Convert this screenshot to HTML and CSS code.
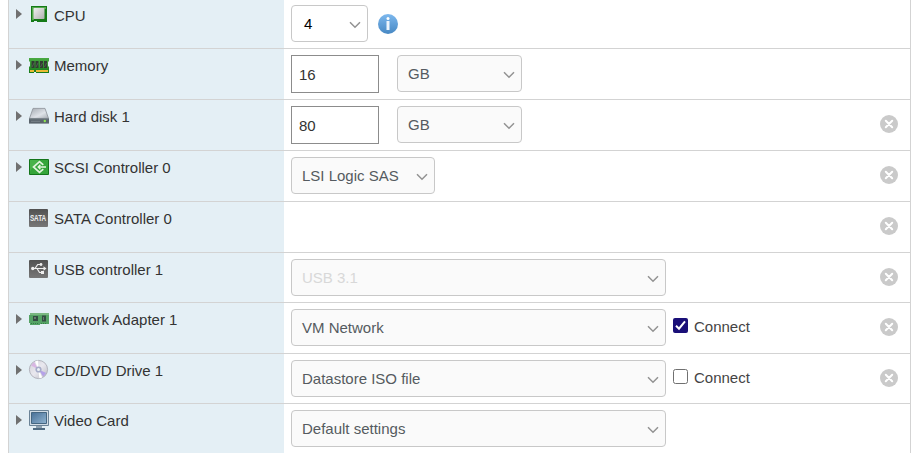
FILE: index.html
```html
<!DOCTYPE html>
<html lang="en">
<head>
<meta charset="utf-8">
<title>Virtual hardware</title>
<link rel="stylesheet" href="styles.css">
</head>
<body>
<svg width="0" height="0" class="defs">
  <defs>
    <linearGradient id="green" x1="0" y1="0" x2="0" y2="1"><stop offset="0" stop-color="#4aaa43"/><stop offset="1" stop-color="#167a18"/></linearGradient>
    <linearGradient id="silver" x1="0" y1="0" x2="1" y2="1"><stop offset="0" stop-color="#f0f0f0"/><stop offset="1" stop-color="#b0b0b0"/></linearGradient>
    <linearGradient id="lid" x1="0" y1="0" x2="1" y2="1"><stop offset="0" stop-color="#a3a9b0"/><stop offset=".6" stop-color="#dfe3e8"/><stop offset="1" stop-color="#a9afb5"/></linearGradient>
    <linearGradient id="dark" x1="0" y1="0" x2="0" y2="1"><stop offset="0" stop-color="#515151"/><stop offset="1" stop-color="#777777"/></linearGradient>
    <linearGradient id="disc" x1="0" y1="0" x2="1" y2="1"><stop offset="0" stop-color="#d2d2d8"/><stop offset=".5" stop-color="#e9e8ef"/><stop offset="1" stop-color="#b9b9c2"/></linearGradient>
    <linearGradient id="screen" x1="0" y1="0" x2="1" y2="1"><stop offset="0" stop-color="#476f97"/><stop offset="1" stop-color="#91b4d0"/></linearGradient>
    <linearGradient id="blue" x1="0" y1="0" x2="0" y2="1"><stop offset="0" stop-color="#7db8ee"/><stop offset="1" stop-color="#4788c3"/></linearGradient>
    <symbol id="remove" viewBox="0 0 18 18"><circle cx="9" cy="9" r="9" fill="#cacaca"/><path d="M5.8 5.8l6.4 6.4m0-6.4l-6.4 6.4" stroke="#fff" stroke-width="2" stroke-linecap="round"/></symbol>
    <symbol id="chevron" viewBox="0 0 12 8"><path d="M1 1.3l5 5 5-5" fill="none" stroke="#929292" stroke-width="1.5"/></symbol>
  </defs>
</svg>
<main class="hardware">
  <section class="row first">
    <div class="label"><i class="arrow"></i>
      <svg class="icon" viewBox="0 0 20 30"><path d="M2 8h16v16H8v-1H5v1H2z" fill="#157a17"/><path d="M3 9h14v2H5v11H3z" fill="#55a94d"/><rect x="4.5" y="10" width="11" height="11" rx=".8" fill="url(#silver)"/></svg>
      <span>CPU</span></div>
    <div class="fields"><div class="select cpu"><span>4</span><svg><use href="#chevron"/></svg></div>
      <svg class="info" viewBox="0 0 20 20"><circle cx="10" cy="10" r="10" fill="url(#blue)"/><circle cx="10" cy="4.4" r="1.5" fill="#fff"/><path d="M8.5 7h3v9h-3z" fill="#edf5fd"/></svg></div>
  </section>
  <section class="row">
    <div class="label"><i class="arrow"></i>
      <svg class="icon" viewBox="0 0 20 30"><path d="M0 9h20v3l-1 1v4l1 1v6H7v-1H5v1H0v-6l1-1v-4l-1-1z" fill="url(#green)"/><path d="M2.5 12h3v7h-3zM6.5 12h3v7h-3zM11 12h3v7h-3zM15 12h3v7h-3z" fill="#303c31"/><path d="M3 18l2-4M7 18l2-4M11.5 18l2-4M15.5 18l2-4" stroke="#687168" stroke-width=".6"/><path d="M1 22h4m2 0h12" stroke="#ebba34" stroke-width="2"/></svg>
      <span>Memory</span></div>
    <div class="fields"><div class="input">16</div><div class="select unit"><span>GB</span><svg><use href="#chevron"/></svg></div></div>
  </section>
  <section class="row">
    <div class="label"><i class="arrow"></i>
      <svg class="icon" viewBox="0 0 20 30"><path d="M4 8.4h12l3.5 10h-19z" fill="url(#lid)" stroke="#8b9197" stroke-width=".8"/><path d="M0 18.4h20v5.2H0z" fill="#5a646c"/><path d="M.5 18.8h19" stroke="#818a91"/><path d="M2 21.3h9" stroke="#79838a"/><circle cx="15.8" cy="21" r="1.2" fill="#8be451"/></svg>
      <span>Hard disk 1</span></div>
    <div class="fields"><div class="input">80</div><div class="select unit"><span>GB</span><svg><use href="#chevron"/></svg></div><svg class="remove"><use href="#remove"/></svg></div>
  </section>
  <section class="row">
    <div class="label"><i class="arrow"></i>
      <svg class="icon" viewBox="0 0 20 30"><path d="M.5 8.5h19v15H.5z" fill="#35a53a" stroke="#14751b"/><path d="M1 9h9L1 20z" fill="#58bd57" opacity=".6"/><path d="M14.3 13.9L10.5 10.6 4.5 16l6 5.4 3.8-3.3" fill="none" stroke="#e4f5df" stroke-width="1.7"/><path d="M9 16H17M11.4 13.8L9.2 16l2.2 2.2" fill="none" stroke="#e4f5df" stroke-width="1.4"/></svg>
      <span>SCSI Controller 0</span></div>
    <div class="fields"><div class="select scsi"><span>LSI Logic SAS</span><svg><use href="#chevron"/></svg></div><svg class="remove"><use href="#remove"/></svg></div>
  </section>
  <section class="row">
    <div class="label"><i class="arrow none"></i>
      <svg class="icon" viewBox="0 0 20 30"><rect x="0" y="7" width="19" height="18" rx="1" fill="url(#dark)"/><text transform="translate(.9 18.8) scale(.96 1.3)" class="sata">SATA</text></svg>
      <span>SATA Controller 0</span></div>
    <div class="fields"><svg class="remove"><use href="#remove"/></svg></div>
  </section>
  <section class="row short">
    <div class="label"><i class="arrow none"></i>
      <svg class="icon" viewBox="0 0 20 30"><rect x="0" y="7" width="19" height="18" rx="1" fill="url(#dark)"/><path d="M3 15.5h12M6 15.5l2.7-4H12M8 15.5l2.5 4H13" fill="none" stroke="#eee" stroke-width="1.2"/><circle cx="3.8" cy="15.5" r="1.7" fill="#eee"/><circle cx="12" cy="11.5" r="1.4" fill="#eee"/><path d="M12 18h3v3h-3zM14.5 13.3l3 2.2-3 2.2z" fill="#eee"/></svg>
      <span>USB controller 1</span></div>
    <div class="fields"><div class="select wide disabled"><span>USB 3.1</span><svg><use href="#chevron"/></svg></div><svg class="remove"><use href="#remove"/></svg></div>
  </section>
  <section class="row">
    <div class="label"><i class="arrow"></i>
      <svg class="icon" viewBox="0 0 20 30"><path d="M1 10h19v11h-9v1H1v-2H0v-8h1z" fill="#56a365"/><path d="M1 10h19v2H1z" fill="#7ab781"/><path d="M4 13h5v5H4zM13 12.5h4v6h-4z" fill="#344d43"/><path d="M5 14h2v2H5zM14 14h1v3h-1z" fill="#657b6e"/><path d="M2 20.5h7m3 0h6" stroke="#347e45" stroke-dasharray="1 1"/></svg>
      <span>Network Adapter 1</span></div>
    <div class="fields"><div class="select wide"><span>VM Network</span><svg><use href="#chevron"/></svg></div>
      <div class="connect"><svg viewBox="0 0 15 15"><rect width="15" height="15" rx="2" fill="#1a0f78"/><path d="M3 7.7l3 3 6-7.4" fill="none" stroke="#fff" stroke-width="2"/></svg><span>Connect</span></div><svg class="remove"><use href="#remove"/></svg></div>
  </section>
  <section class="row short">
    <div class="label"><i class="arrow"></i>
      <svg class="icon" viewBox="0 0 20 30"><circle cx="9.5" cy="15.5" r="9.1" fill="url(#disc)" stroke="#a7a7b1" stroke-width=".8"/><path d="M9.5 15.5L2 11.5 5 8z" fill="#d8b6e3"/><path d="M9.5 15.5L6 7.5l3-1z" fill="#fff"/><path d="M9.5 15.5l7.7 3.5-3 3.5z" fill="#b5a2e8"/><path d="M9.5 15.5l3.8 8-3 .8z" fill="#fff"/><circle cx="9.5" cy="15.5" r="3.1" fill="#a6acc9"/><circle cx="9.5" cy="15.5" r="1.5" fill="#edf2f7"/></svg>
      <span>CD/DVD Drive 1</span></div>
    <div class="fields"><div class="select wide"><span>Datastore ISO file</span><svg><use href="#chevron"/></svg></div>
      <div class="connect"><svg viewBox="0 0 15 15"><rect x=".5" y=".5" width="14" height="14" rx="2" fill="#fff" stroke="#707070"/></svg><span>Connect</span></div><svg class="remove"><use href="#remove"/></svg></div>
  </section>
  <section class="row">
    <div class="label"><i class="arrow"></i>
      <svg class="icon" viewBox="0 0 20 30"><path d="M.5 6.5h19v15H.5z" fill="#d2dce5" stroke="#6b8397"/><path d="M2.5 8.5h15v11h-15z" fill="url(#screen)" stroke="#456681"/><path d="M7 22h6v2H7z" fill="#8fa1b0"/><path d="M4 24h12v2H4z" fill="#506b82"/></svg>
      <span>Video Card</span></div>
    <div class="fields"><div class="select wide"><span>Default settings</span><svg><use href="#chevron"/></svg></div></div>
  </section>
</main>
</body>
</html>
```
FILE: styles.css
```css
* { box-sizing: border-box; }
body {
  margin: 0;
  height: 453px;
  overflow: hidden;
  background: #fff;
  color: #333;
  font: 15px/20px "Liberation Sans", Arial, sans-serif;
}
svg { display: block; flex: none; }
.defs { position: absolute; }
.hardware {
  margin-left: 8px;
  width: 903px;
  border: solid #d3d3d3;
  border-width: 0 1px;
}
.row {
  display: grid;
  grid-template-columns: 275px 1fr;
  height: 51px;
  border-bottom: 1px solid #d3d3d3;
}
.row.first { height: 49px; }
.row.short { height: 50px; }
.label {
  display: flex;
  align-items: flex-start;
  padding-left: 7px;
  background: #e4eff5;
}
.label span { margin: 7px 0 0 5px; }
.first .label span { margin-top: 6px; }
.first .icon { margin-top: -2px; }
.arrow {
  margin: 11px 7px 0 0;
  border: solid transparent;
  border-width: 5px 0 5px 6px;
  border-left-color: #707070;
}
.first .arrow { margin-top: 9px; }
.arrow.none { visibility: hidden; }
.icon { width: 20px; height: 30px; overflow: visible; }
.sata { font: bold 6.6px "Liberation Sans", Arial, sans-serif; fill: #eee; }
.fields {
  display: flex;
  align-items: flex-start;
  padding: 6px 12px 0 7px;
}
.first .fields { padding-top: 5px; }
.select {
  display: flex;
  align-items: center;
  justify-content: space-between;
  height: 37px;
  padding: 0 6px 0 10px;
  border: 1px solid #c8c8c8;
  border-radius: 4px;
  background: #fafafa;
  color: #555b60;
}
.select svg { width: 12px; height: 8px; margin-top: 2px; }
.cpu { width: 77px; padding-left: 12px; background: #fff; color: #000; }
.unit { width: 125px; margin-left: 18px; }
.scsi { width: 144px; }
.wide { width: 375px; }
.disabled { color: #d8d8d8; }
.input {
  width: 88px;
  height: 38px;
  padding: 9px 7px;
  border: 1px solid #8c8c8c;
  color: #333;
}
.info { width: 20px; height: 20px; margin: 9px 0 0 10px; }
.connect { display: flex; margin: 8px 0 0 6.5px; color: #444; }
.connect svg { width: 15px; height: 15px; margin: 1px 6.5px 0 0; }
.remove { width: 18px; height: 18px; margin: 9px 0 0 auto; }
```
